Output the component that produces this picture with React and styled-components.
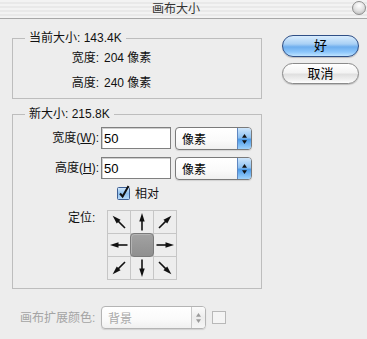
import React from 'react';
import styled, { createGlobalStyle } from 'styled-components';

const GlobalStyle = createGlobalStyle`
  html, body { margin: 0; padding: 0; background: #ededed; }
  body {
    font-family: "Liberation Sans", "Noto Sans CJK SC", sans-serif;
    font-size: 12px;
    color: #111;
  }
`;

const Window = styled.div`
  width: 367px;
  height: 339px;
  overflow: hidden;
  background: #ededed;
  display: flex;
  flex-direction: column;
`;

const TitleBar = styled.div`
  height: 18px;
  border-bottom: 1px solid #a8a8a8;
  display: flex;
  align-items: center;
  background: repeating-linear-gradient(to bottom, #f3f3f3 0 2px, #e9e9e9 2px 4px);
`;

const Title = styled.div`
  flex: 1;
  text-align: center;
  font-size: 12px;
  line-height: 18px;
  color: #333;
`;

const CloseDot = styled.div`
  width: 14px;
  height: 14px;
  margin: 0 1px 2px 0;
  border-radius: 50%;
  box-sizing: border-box;
  border: 1px solid #8e8e8e;
  background: radial-gradient(circle at 50% 30%, #ffffff 0%, #e2e2e2 50%, #b2b2b2 100%);
`;

const Body = styled.div`
  display: flex;
  padding-left: 12px;
`;

const Main = styled.div`
  width: 250px;
  padding-top: 11px;
  display: flex;
  flex-direction: column;
  gap: 7px;
`;

const Side = styled.div`
  margin-left: 20px;
  padding-top: 16px;
  display: flex;
  flex-direction: column;
  gap: 6px;
  width: 77px;
`;

const Group = styled.fieldset`
  margin: 0;
  min-width: 0;
  padding: ${p => p.$pad};
  border: 1px solid #bdbdbd;
  display: flex;
  flex-direction: column;
  gap: ${p => p.$gap}px;
`;

const Legend = styled.legend`
  margin-left: 12px;
  padding: 0 4px;
  line-height: 16px;
  font-size: 12px;
  color: #111;
`;

const Row = styled.div`
  display: grid;
  grid-template-columns: 86px auto auto;
  justify-content: start;
  column-gap: ${p => p.$gap}px;
  align-items: ${p => p.$align || 'center'};
  height: ${p => p.$h}px;
`;

const Label = styled.label`
  text-align: right;
  white-space: nowrap;
  line-height: ${p => p.$lh || 14}px;
  color: ${p => (p.$disabled ? '#a4a4a4' : '#111')};
`;

const Value = styled.span`
  white-space: nowrap;
  line-height: 14px;
`;

const Key = styled.u`
  text-decoration: underline;
`;

const TextInput = styled.input`
  width: 70px;
  height: 22px;
  box-sizing: border-box;
  margin: 0;
  padding: 0 0 0 2px;
  border: 1px solid #808080;
  box-shadow: inset 1px 1px 0 #cfcfcf;
  background: #fff;
  font: 13px "Liberation Sans", sans-serif;
  color: #000;
  outline: none;
`;

const Popup = styled.div`
  width: ${p => p.$w}px;
  height: 23px;
  margin-left: ${p => p.$ml || 0}px;
  box-sizing: border-box;
  border: 1px solid ${p => (p.$disabled ? '#b4b4b4' : '#7a7a7a')};
  border-radius: 4px;
  background: linear-gradient(to bottom, #ffffff 0%, #fafafa 60%, #f0f0f0 100%);
  box-shadow: 0 1px 1px rgba(0, 0, 0, 0.12);
  display: flex;
  overflow: hidden;
  color: ${p => (p.$disabled ? '#a8a8a8' : '#000')};
`;

const PopupText = styled.span`
  flex: 1;
  padding-left: 6px;
  display: flex;
  align-items: center;
  font-size: 12px;
`;

const PopupArrows = styled.span`
  width: 13px;
  display: flex;
  align-items: center;
  justify-content: center;
  border-left: 1px solid ${p => (p.$disabled ? '#c8c8c8' : '#5f86c0')};
  background: ${p =>
    p.$disabled
      ? 'linear-gradient(to bottom, #fbfbfb 0%, #ececec 50%, #f6f6f6 100%)'
      : 'linear-gradient(to bottom, #cfe6fb 0%, #8fc2f2 45%, #4d9be8 55%, #9fd2fb 100%)'};
`;

const CheckRow = styled.div`
  display: flex;
  align-items: center;
  gap: 4px;
  height: 13px;
  margin-left: 104px;
  line-height: 14px;
`;

const PositionRow = styled.div`
  display: flex;
  align-items: flex-start;
  margin-top: 3px;
`;

const PositionLabel = styled(Label)`
  width: 39px;
  flex: none;
  margin: 1px 0 0 55px;
  text-align: left;
`;

const Grid = styled.div`
  display: grid;
  grid-template-columns: repeat(3, 22px);
  grid-template-rows: repeat(3, 22px);
  gap: 1px;
  border: 1px solid #c6c6c6;
  background: #c6c6c6;
`;

const Cell = styled.div`
  background: #ededed;
  display: flex;
  align-items: center;
  justify-content: center;
`;

const Anchor = styled.div`
  width: 24px;
  height: 24px;
  margin: -1px;
  box-sizing: border-box;
  border-radius: 4px;
  border: 1px solid #7a7a7a;
  background: linear-gradient(to bottom, #a2a2a2, #8f8f8f);
  box-shadow: inset 1px 1px 0 #b4b4b4;
`;

const AquaButton = styled.button`
  width: 77px;
  height: ${p => p.$h}px;
  margin: 0;
  padding: 0;
  border-radius: 11px;
  border: 1px solid ${p => (p.$primary ? '#2f4f86' : '#8a8a8a')};
  background: ${p =>
    p.$primary
      ? 'linear-gradient(to bottom, #d9ecfd 0%, #a9d0f5 40%, #6eaeee 55%, #8cc6fb 80%, #bfe4ff 100%)'
      : 'linear-gradient(to bottom, #ffffff 0%, #f3f3f3 45%, #e0e0e0 55%, #f2f2f2 85%, #ffffff 100%)'};
  box-shadow: 0 1px 1px rgba(0, 0, 0, 0.2);
  font: 13px "Liberation Sans", "Noto Sans CJK SC", sans-serif;
  line-height: 16px;
  color: #000;
`;

const Footer = styled.div`
  display: flex;
  align-items: center;
  padding: 17px 0 0 20px;
`;

const FooterLabel = styled(Label)`
  width: 81px;
  text-align: left;
`;

const Swatch = styled.div`
  width: 14px;
  height: 13px;
  margin-left: 6px;
  box-sizing: border-box;
  border: 1px solid #b8b8b8;
  background: #f4f4f4;
`;

const Arrow = ({ angle }) => (
  <svg width="22" height="22" viewBox="0 0 22 22">
    <g transform={`rotate(${angle} 11 11)`}>
      <line x1="11" y1="19.5" x2="11" y2="8" stroke="#111" strokeWidth="1.6" />
      <polygon points="11,2 8.3,10.5 13.7,10.5" fill="#111" />
    </g>
  </svg>
);

const UpDown = ({ color }) => (
  <svg width="7" height="12" viewBox="0 0 7 12">
    <polygon points="3.5,1 1,4.8 6,4.8" fill={color} />
    <polygon points="3.5,11 1,7.2 6,7.2" fill={color} />
  </svg>
);

const CheckBox = () => (
  <svg width="14" height="15" viewBox="0 0 14 15" style={{ marginTop: -2 }}>
    <defs>
      <linearGradient id="cb" x1="0" y1="0" x2="0" y2="1">
        <stop offset="0" stopColor="#d5e9fb" />
        <stop offset="0.5" stopColor="#8fc0ee" />
        <stop offset="1" stopColor="#b9dcfb" />
      </linearGradient>
    </defs>
    <rect x="0.5" y="2.5" width="12" height="12" rx="1" fill="url(#cb)" stroke="#3e5f94" />
    <path d="M3 8.5 L5.6 11.5 L11.5 1" fill="none" stroke="#111" strokeWidth="2" />
  </svg>
);

const Select = ({ value, width, ml, disabled }) => (
  <Popup $w={width} $ml={ml} $disabled={disabled}>
    <PopupText>{value}</PopupText>
    <PopupArrows $disabled={disabled}>
      <UpDown color={disabled ? '#9a9a9a' : '#111'} />
    </PopupArrows>
  </Popup>
);

const arrows = [-45, 0, 45, -90, null, 90, -135, 180, 135];

export default function App() {
  return (
    <>
      <GlobalStyle />
      <Window>
        <TitleBar>
          <Title>画布大小</Title>
          <CloseDot />
        </TitleBar>
        <Body>
          <Main>
            <Group $pad="2px 0 5px" $gap={5}>
              <Legend>当前大小: 143.4K</Legend>
              <Row $gap={5} $h={20}>
                <Label>宽度:</Label>
                <Value>204 像素</Value>
              </Row>
              <Row $gap={5} $h={20}>
                <Label>高度:</Label>
                <Value>240 像素</Value>
              </Row>
            </Group>
            <Group $pad="5px 0 8px" $gap={7}>
              <Legend>新大小: 215.8K</Legend>
              <Row $gap={2} $h={23} $align="start">
                <Label $lh={22}>
                  宽度(<Key>W</Key>):
                </Label>
                <TextInput defaultValue="50" readOnly />
                <Select value="像素" width={77} ml={2} />
              </Row>
              <Row $gap={2} $h={23} $align="start">
                <Label $lh={22}>
                  高度(<Key>H</Key>):
                </Label>
                <TextInput defaultValue="50" readOnly />
                <Select value="像素" width={77} ml={2} />
              </Row>
              <CheckRow>
                <CheckBox />
                <span>相对</span>
              </CheckRow>
              <PositionRow>
                <PositionLabel>定位:</PositionLabel>
                <Grid>
                  {arrows.map((a, i) => (
                    <Cell key={i}>{a === null ? <Anchor /> : <Arrow angle={a} />}</Cell>
                  ))}
                </Grid>
              </PositionRow>
            </Group>
          </Main>
          <Side>
            <AquaButton $primary $h={22}>好</AquaButton>
            <AquaButton $h={21}>取消</AquaButton>
          </Side>
        </Body>
        <Footer>
          <FooterLabel $disabled>画布扩展颜色:</FooterLabel>
          <Select value="背景" width={105} disabled />
          <Swatch />
        </Footer>
      </Window>
    </>
  );
}
